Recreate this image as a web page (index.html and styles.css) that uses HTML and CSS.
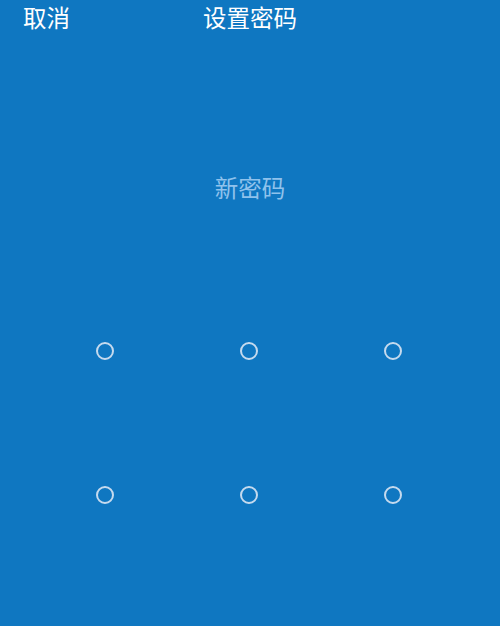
FILE: index.html
```html
<!DOCTYPE html>
<html lang="zh">
<head>
<meta charset="utf-8">
<link rel="stylesheet" href="styles.css">
</head>
<body>
<div class="screen">
  <header class="bar">
    <span class="cancel">取消</span>
    <span class="title">设置密码</span>
  </header>
  <div class="prompt">新密码</div>
  <div class="pad">
    <div class="cell"><span class="dot"></span></div>
    <div class="cell"><span class="dot"></span></div>
    <div class="cell"><span class="dot"></span></div>
    <div class="cell"><span class="dot"></span></div>
    <div class="cell"><span class="dot"></span></div>
    <div class="cell"><span class="dot"></span></div>
    <div class="cell"><span class="dot"></span></div>
    <div class="cell"><span class="dot"></span></div>
    <div class="cell"><span class="dot"></span></div>
  </div>
</div>
</body>
</html>
```
FILE: styles.css
```css
html, body {
  margin: 0;
  padding: 0;
  background: #0f77c1;
}
.screen {
  width: 500px;
  height: 626px;
  overflow: hidden;
  background: #0f77c1;
  font-family: "Noto Sans CJK SC", "Noto Sans", sans-serif;
}
.bar {
  position: relative;
  height: 34px;
  display: flex;
  align-items: center;
  justify-content: center;
}
.cancel {
  position: absolute;
  left: 23px;
  top: 0;
  line-height: 34px;
  font-size: 23.5px;
  color: #ffffff;
}
.title {
  font-size: 23.5px;
  line-height: 34px;
  color: #ffffff;
}
.prompt {
  margin-top: 135px;
  text-align: center;
  font-size: 23.5px;
  line-height: 36px;
  color: #8fc2ec;
}
.pad {
  margin: 74px 0 0 33px;
  width: 432px;
  display: grid;
  grid-template-columns: repeat(3, 144px);
  grid-auto-rows: 144px;
}
.cell {
  display: flex;
  align-items: center;
  justify-content: center;
}
.dot {
  width: 14px;
  height: 14px;
  border: 2px solid #c5daee;
  border-radius: 50%;
}
```
